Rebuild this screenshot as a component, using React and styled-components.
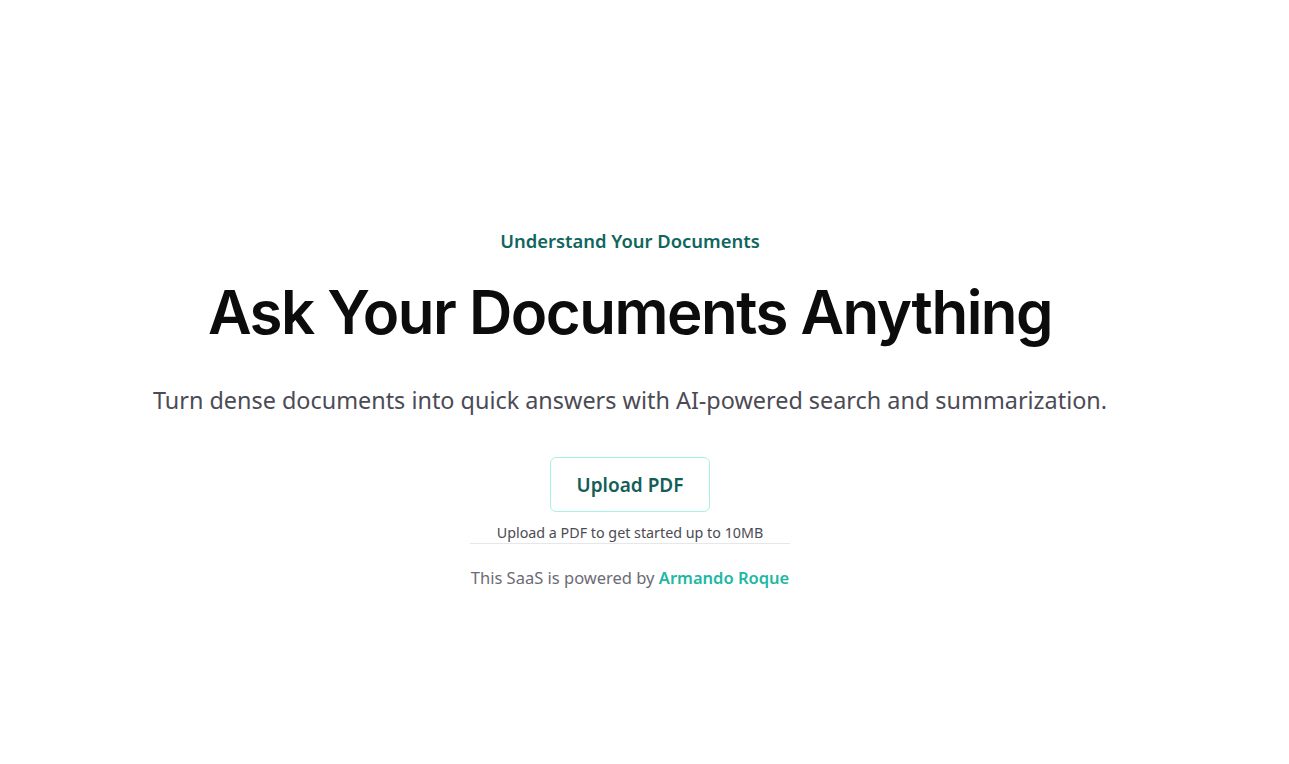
import React from "react";
import styled, { createGlobalStyle } from "styled-components";

const GlobalStyle = createGlobalStyle`
  html, body {
    margin: 0;
    padding: 0;
    background: #ffffff;
  }
  body {
    font-family: "Noto Sans", "Open Sans", sans-serif;
  }
`;

export default function App() {
  return (
    <>
      <GlobalStyle />
      <Page>
        <Hero>
          <Eyebrow>Understand Your Documents</Eyebrow>
          <Title>Ask Your Documents Anything</Title>
          <Lead>
            Turn dense documents into quick answers with AI-powered search and
            summarization.
          </Lead>
          <UploadButton type="button">Upload PDF</UploadButton>
          <Hint>Upload a PDF to get started up to 10MB</Hint>
          <Footer>
            This SaaS is powered by <Credit href="#">Armando Roque</Credit>
          </Footer>
        </Hero>
      </Page>
    </>
  );
}

const Page = styled.main`
  min-height: 764px;
  display: flex;
  justify-content: center;
  padding: 228px 29px 0 0;
  box-sizing: border-box;
`;

const Hero = styled.section`
  display: flex;
  flex-direction: column;
  align-items: center;
  text-align: center;
`;

const Eyebrow = styled.p`
  margin: 0;
  font-size: 18.4px;
  line-height: 26px;
  font-weight: 600;
  color: #0f665e;
`;

const Title = styled.h1`
  margin: 28px 0 0;
  font-family: Inter, "Liberation Sans", sans-serif;
  font-size: 60px;
  line-height: 60px;
  font-weight: 600;
  letter-spacing: -1.5px;
  color: #0c0c0c;
`;

const Lead = styled.p`
  margin: 42px 0 0;
  font-size: 23.4px;
  line-height: 32px;
  color: #4b4b55;
`;

const UploadButton = styled.button`
  margin-top: 41px;
  width: 160px;
  height: 55px;
  border: 1px solid #a7f3e3;
  border-radius: 6px;
  background: #ffffff;
  font-family: inherit;
  font-size: 19px;
  font-weight: 600;
  color: #135e57;
  cursor: pointer;
`;

const Hint = styled.p`
  margin: 11px 0 0;
  width: 320px;
  border-bottom: 1px solid #e5e7eb;
  font-size: 14.3px;
  line-height: 20px;
  color: #4b4b55;
`;

const Footer = styled.p`
  margin: 22px 0 0;
  font-size: 16.5px;
  line-height: 24px;
  color: #6b6b76;
`;

const Credit = styled.a`
  font-weight: 600;
  color: #20b8a3;
  text-decoration: none;
`;
